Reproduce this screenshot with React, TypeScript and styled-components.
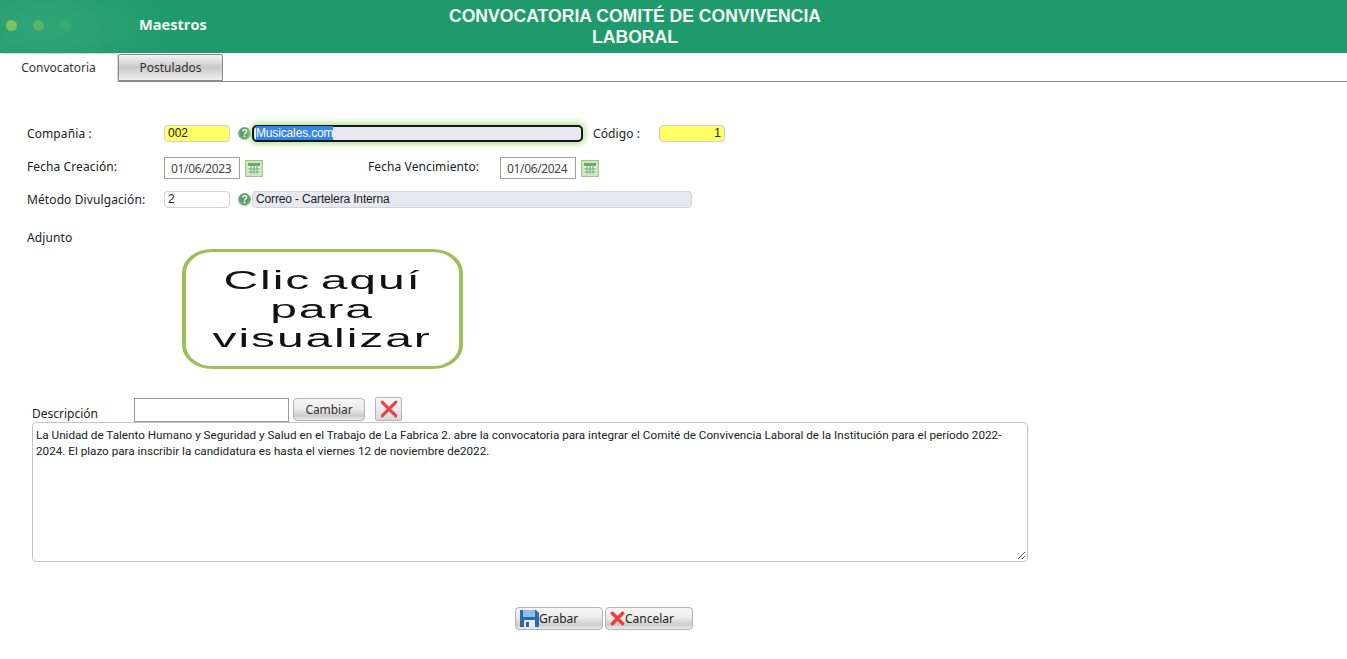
import * as React from "react";
import styled, { createGlobalStyle } from "styled-components";

const Global = createGlobalStyle`
  html, body {
    margin: 0;
    padding: 0;
    background: #fff;
    color: #222;
    font-family: "Noto Sans", "Open Sans", sans-serif;
    font-size: 12px;
  }
  * {
    box-sizing: border-box;
  }
`;

const Page = styled.div`
  width: 1347px;
  height: 659px;
  overflow: hidden;
`;

const Header = styled.header`
  height: 53px;
  display: flex;
  background: radial-gradient(ellipse 130px 70px at 45px 28px, #30a677 0%, #1f9a6a 100%);
  background-color: #1f9a6a;
`;

const Dots = styled.div`
  width: 139px;
  padding: 20px 0 0 6px;
  display: flex;
  gap: 16px;
`;

const Dot = styled.span<{ $alpha: number }>`
  width: 11px;
  height: 11px;
  border-radius: 50%;
  background: rgba(140, 200, 90, ${(p) => p.$alpha});
  filter: blur(0.5px);
`;

const MenuTitle = styled.div`
  width: 296px;
  padding-top: 15px;
  color: #f2f8f4;
  font-family: "Open Sans", sans-serif;
  font-weight: 700;
  font-size: 14.6px;
  line-height: 18px;
`;

const PageTitle = styled.h1`
  margin: 0;
  width: 400px;
  padding-top: 6px;
  text-align: center;
  white-space: nowrap;
  color: #f4f8f6;
  font-family: "Liberation Sans", Arial, sans-serif;
  font-weight: 700;
  font-size: 17.6px;
  line-height: 21px;
`;

const Tabs = styled.nav`
  height: 29px;
  display: flex;
  align-items: flex-end;
  border-bottom: 1px solid #8a8a8a;
`;

const Tab = styled.div<{ $active?: boolean }>`
  height: ${(p) => (p.$active ? "29px" : "27px")};
  width: ${(p) => (p.$active ? "118px" : "105px")};
  margin-bottom: ${(p) => (p.$active ? "-1px" : "0")};
  text-align: center;
  line-height: ${(p) => (p.$active ? "28px" : "26px")};
  color: #333;
  background: ${(p) =>
    p.$active ? "#fff" : "linear-gradient(#f4f4f4 0%, #c9c9c9 50%, #f0f0f0 100%)"};
  border: 1px solid ${(p) => (p.$active ? "#d4d4d4" : "#8a8a8a")};
  border-bottom: ${(p) => (p.$active ? "none" : "1px solid #8a8a8a")};
  border-left: ${(p) => (p.$active ? "none" : "1px solid #8a8a8a")};
  border-radius: 2px 2px 0 0;
`;

const Form = styled.main`
  padding: 40px 0 0 27px;
`;

const Row = styled.div<{ $height: number }>`
  height: ${(p) => p.$height}px;
  display: flex;
  align-items: center;
`;

const AttachmentRow = styled(Row)`
  margin-top: 16px;
`;

const Label = styled.label<{ $width: number }>`
  width: ${(p) => p.$width}px;
  flex: none;
  color: #222;
  letter-spacing: 0.1px;
`;

const CodeLabel = styled(Label)`
  margin-left: 10px;
`;

const DueLabel = styled(Label)`
  margin-left: 105px;
`;

const Field = styled.div<{ $width: number; $right?: boolean; $fill?: "yellow" | "white" }>`
  width: ${(p) => p.$width}px;
  height: 17px;
  flex: none;
  padding: 0 3px;
  border: 1px solid #d0d0d0;
  border-radius: 4px;
  background: ${(p) => (p.$fill === "yellow" ? "#ffff66" : "#fff")};
  text-align: ${(p) => (p.$right ? "right" : "left")};
  font-family: "Liberation Sans", Arial, sans-serif;
  line-height: 15px;
  color: #222;
`;

const DateField = styled.div`
  width: 76px;
  height: 22px;
  flex: none;
  margin-top: 4px;
  border: 1px solid #a0a0a0;
  padding-left: 6px;
  line-height: 21px;
  letter-spacing: -0.35px;
  color: #444;
`;

const ReadOnly = styled.div<{ $width: number }>`
  width: ${(p) => p.$width}px;
  height: 17px;
  flex: none;
  padding: 0 3px;
  border: 1px solid #d4d4d8;
  border-radius: 4px;
  background: #e8e8f2;
  font-family: "Liberation Sans", Arial, sans-serif;
  line-height: 15px;
  letter-spacing: -0.15px;
  color: #222;
`;

const FocusedField = styled.div`
  width: 331px;
  height: 17px;
  flex: none;
  padding: 0 2px;
  border: 2px solid #16161a;
  border-radius: 5px;
  background: #e8e8f2;
  box-shadow: 0 0 6px 2px #a8e28c;
  font-family: "Liberation Sans", Arial, sans-serif;
  line-height: 13px;
  letter-spacing: -0.15px;
`;

const Selected = styled.span`
  background: #3584e8;
  color: #fff;
`;

const HelpBadge = styled.span`
  width: 13px;
  height: 13px;
  flex: none;
  margin: 0 1px 0 8px;
  border-radius: 50%;
  background: radial-gradient(circle at 50% 45%, #4f9460 0%, #5f9f6c 45%, #c6e2c4 100%);
  color: #f4faf2;
  font: 700 10px/13px "Liberation Sans", sans-serif;
  text-align: center;
`;

const CalendarButton = styled.span`
  width: 18px;
  height: 17px;
  flex: none;
  margin: 4px 0 0 5px;
`;

const Attachment = styled.div`
  width: 281px;
  height: 120px;
  margin: 0 0 29px 155px;
  border: 3px solid #9cbf5c;
  border-left-width: 4px;
  border-right-width: 4px;
  border-radius: 30px / 24px;
  display: flex;
  flex-direction: column;
  align-items: center;
  justify-content: center;
  font-family: "Liberation Sans", sans-serif;
  font-size: 25px;
  line-height: 29px;
  letter-spacing: 1px;
  color: #111;
`;

const AttachmentLine = styled.span`
  transform: scaleX(1.92);
  white-space: nowrap;
  word-spacing: -3px;
`;

const DescriptionRow = styled.div`
  height: 24px;
  margin-left: 5px;
  display: flex;
  align-items: flex-start;
`;

const DescriptionLabel = styled.span`
  width: 102px;
  padding-top: 7px;
  line-height: 18px;
`;

const FileBox = styled.div`
  width: 155px;
  height: 24px;
  border: 1px solid #9a9a9a;
`;

const Button = styled.button<{ $width: number }>`
  width: ${(p) => p.$width}px;
  height: 23px;
  padding: 0;
  border: 1px solid #b4b4b4;
  border-radius: 4px;
  background: linear-gradient(#f6f6f6 0%, #ececec 45%, #cdcdcd 80%, #ececec 100%);
  color: #333;
  font-family: inherit;
  font-size: 12px;
  display: inline-flex;
  align-items: center;
  justify-content: center;
`;

const ChangeButton = styled(Button)`
  margin: 0 10px 0 4px;
  letter-spacing: -0.1px;
`;

const ClearButton = styled(Button)`
  height: 24px;
  margin-top: -1px;
  border-radius: 2px;
  background: linear-gradient(#f6f6f6 0%, #e8e8e8 60%, #d8d8d8 100%);
`;

const Description = styled.div`
  width: 996px;
  height: 140px;
  margin-left: 5px;
  position: relative;
  padding: 4px 3px;
  border: 1px solid #c4c4c4;
  border-radius: 4px;
  font-family: "Roboto", sans-serif;
  font-size: 11.7px;
  line-height: 16px;
  color: #222;
`;

const Grip = styled.svg`
  position: absolute;
  right: 1px;
  bottom: 1px;
`;

const Actions = styled.div`
  margin: 45px 0 0 488px;
  display: flex;
  gap: 2px;
`;

const ActionButton = styled(Button)`
  justify-content: flex-start;
  padding-left: 4px;
  color: #222;
`;

function HelpIcon() {
  return <HelpBadge>?</HelpBadge>;
}

function Calendar() {
  return (
    <CalendarButton>
      <svg width="18" height="17" viewBox="0 0 18 17">
        <rect x="0.5" y="0.5" width="17" height="16" fill="#cfe6c4" stroke="#9cc792" />
        <rect x="3" y="3" width="12" height="11" fill="#eef7ea" />
        <rect x="3" y="3" width="12" height="3" fill="#6bab66" />
        <path d="M3 9h12M3 12h12M6 6v8M9 6v8M12 6v8" stroke="#6bab66" strokeWidth="1" />
      </svg>
    </CalendarButton>
  );
}

function RedCross({ size, weight }: { size: number; weight: number }) {
  return (
    <svg width={size} height={size} viewBox="0 0 16 16">
      <path d="M2.5 2.5L13.5 13.5M13.5 2.5L2.5 13.5" fill="none" stroke="#ec3f42" strokeWidth={weight} strokeLinecap="round" />
    </svg>
  );
}

function Floppy() {
  return (
    <svg width="19" height="19" viewBox="0 0 19 19">
      <path d="M0 1h16l3 3v14H0z" fill="#2a6aa6" />
      <rect x="3" y="1" width="12" height="7" fill="#8cc0ec" />
      <rect x="4" y="11" width="11" height="7" fill="#e6eef5" />
      <rect x="6" y="13" width="3" height="5" fill="#2a6aa6" />
    </svg>
  );
}

export default function App() {
  return (
    <Page>
      <Global />
      <Header>
        <Dots>
          <Dot $alpha={0.85} />
          <Dot $alpha={0.45} />
          <Dot $alpha={0.15} />
        </Dots>
        <MenuTitle>Maestros</MenuTitle>
        <PageTitle>
          CONVOCATORIA COMITÉ DE CONVIVENCIA
          <br />
          LABORAL
        </PageTitle>
      </Header>
      <Tabs>
        <Tab $active>Convocatoria</Tab>
        <Tab>Postulados</Tab>
      </Tabs>
      <Form>
        <Row $height={22}>
          <Label $width={137}>Compañia :</Label>
          <Field $width={66} $fill="yellow">002</Field>
          <HelpIcon />
          <FocusedField>
            <Selected>Musicales.com</Selected>
          </FocusedField>
          <CodeLabel $width={66}>Código :</CodeLabel>
          <Field $width={66} $fill="yellow" $right>1</Field>
        </Row>
        <Row $height={44}>
          <Label $width={137}>Fecha Creación:</Label>
          <DateField>01/06/2023</DateField>
          <Calendar />
          <DueLabel $width={132}>Fecha Vencimiento:</DueLabel>
          <DateField>01/06/2024</DateField>
          <Calendar />
        </Row>
        <Row $height={22}>
          <Label $width={137}>Método Divulgación:</Label>
          <Field $width={66}>2</Field>
          <HelpIcon />
          <ReadOnly $width={440}>Correo - Cartelera Interna</ReadOnly>
        </Row>
        <AttachmentRow $height={23}>
          <Label $width={137}>Adjunto</Label>
        </AttachmentRow>
        <Attachment>
          <AttachmentLine>Clic aquí</AttachmentLine>
          <AttachmentLine>para</AttachmentLine>
          <AttachmentLine>visualizar</AttachmentLine>
        </Attachment>
        <DescriptionRow>
          <DescriptionLabel>Descripción</DescriptionLabel>
          <FileBox />
          <ChangeButton $width={72}>Cambiar</ChangeButton>
          <ClearButton $width={27}>
            <RedCross size={20} weight={2.4} />
          </ClearButton>
        </DescriptionRow>
        <Description>
          La Unidad de Talento Humano y Seguridad y Salud en el Trabajo de La Fabrica 2. abre la convocatoria para integrar el Comité de Convivencia Laboral de la Institución para el período 2022-2024. El plazo para inscribir la candidatura es hasta el viernes 12 de noviembre de2022.
          <Grip width="9" height="9" viewBox="0 0 9 9">
            <path d="M8 1L1 8M8 5L5 8" stroke="#555" strokeWidth="1" />
          </Grip>
        </Description>
        <Actions>
          <ActionButton $width={88}>
            <Floppy />
            Grabar
          </ActionButton>
          <ActionButton $width={88}>
            <RedCross size={15} weight={3.8} />
            Cancelar
          </ActionButton>
        </Actions>
      </Form>
    </Page>
  );
}
